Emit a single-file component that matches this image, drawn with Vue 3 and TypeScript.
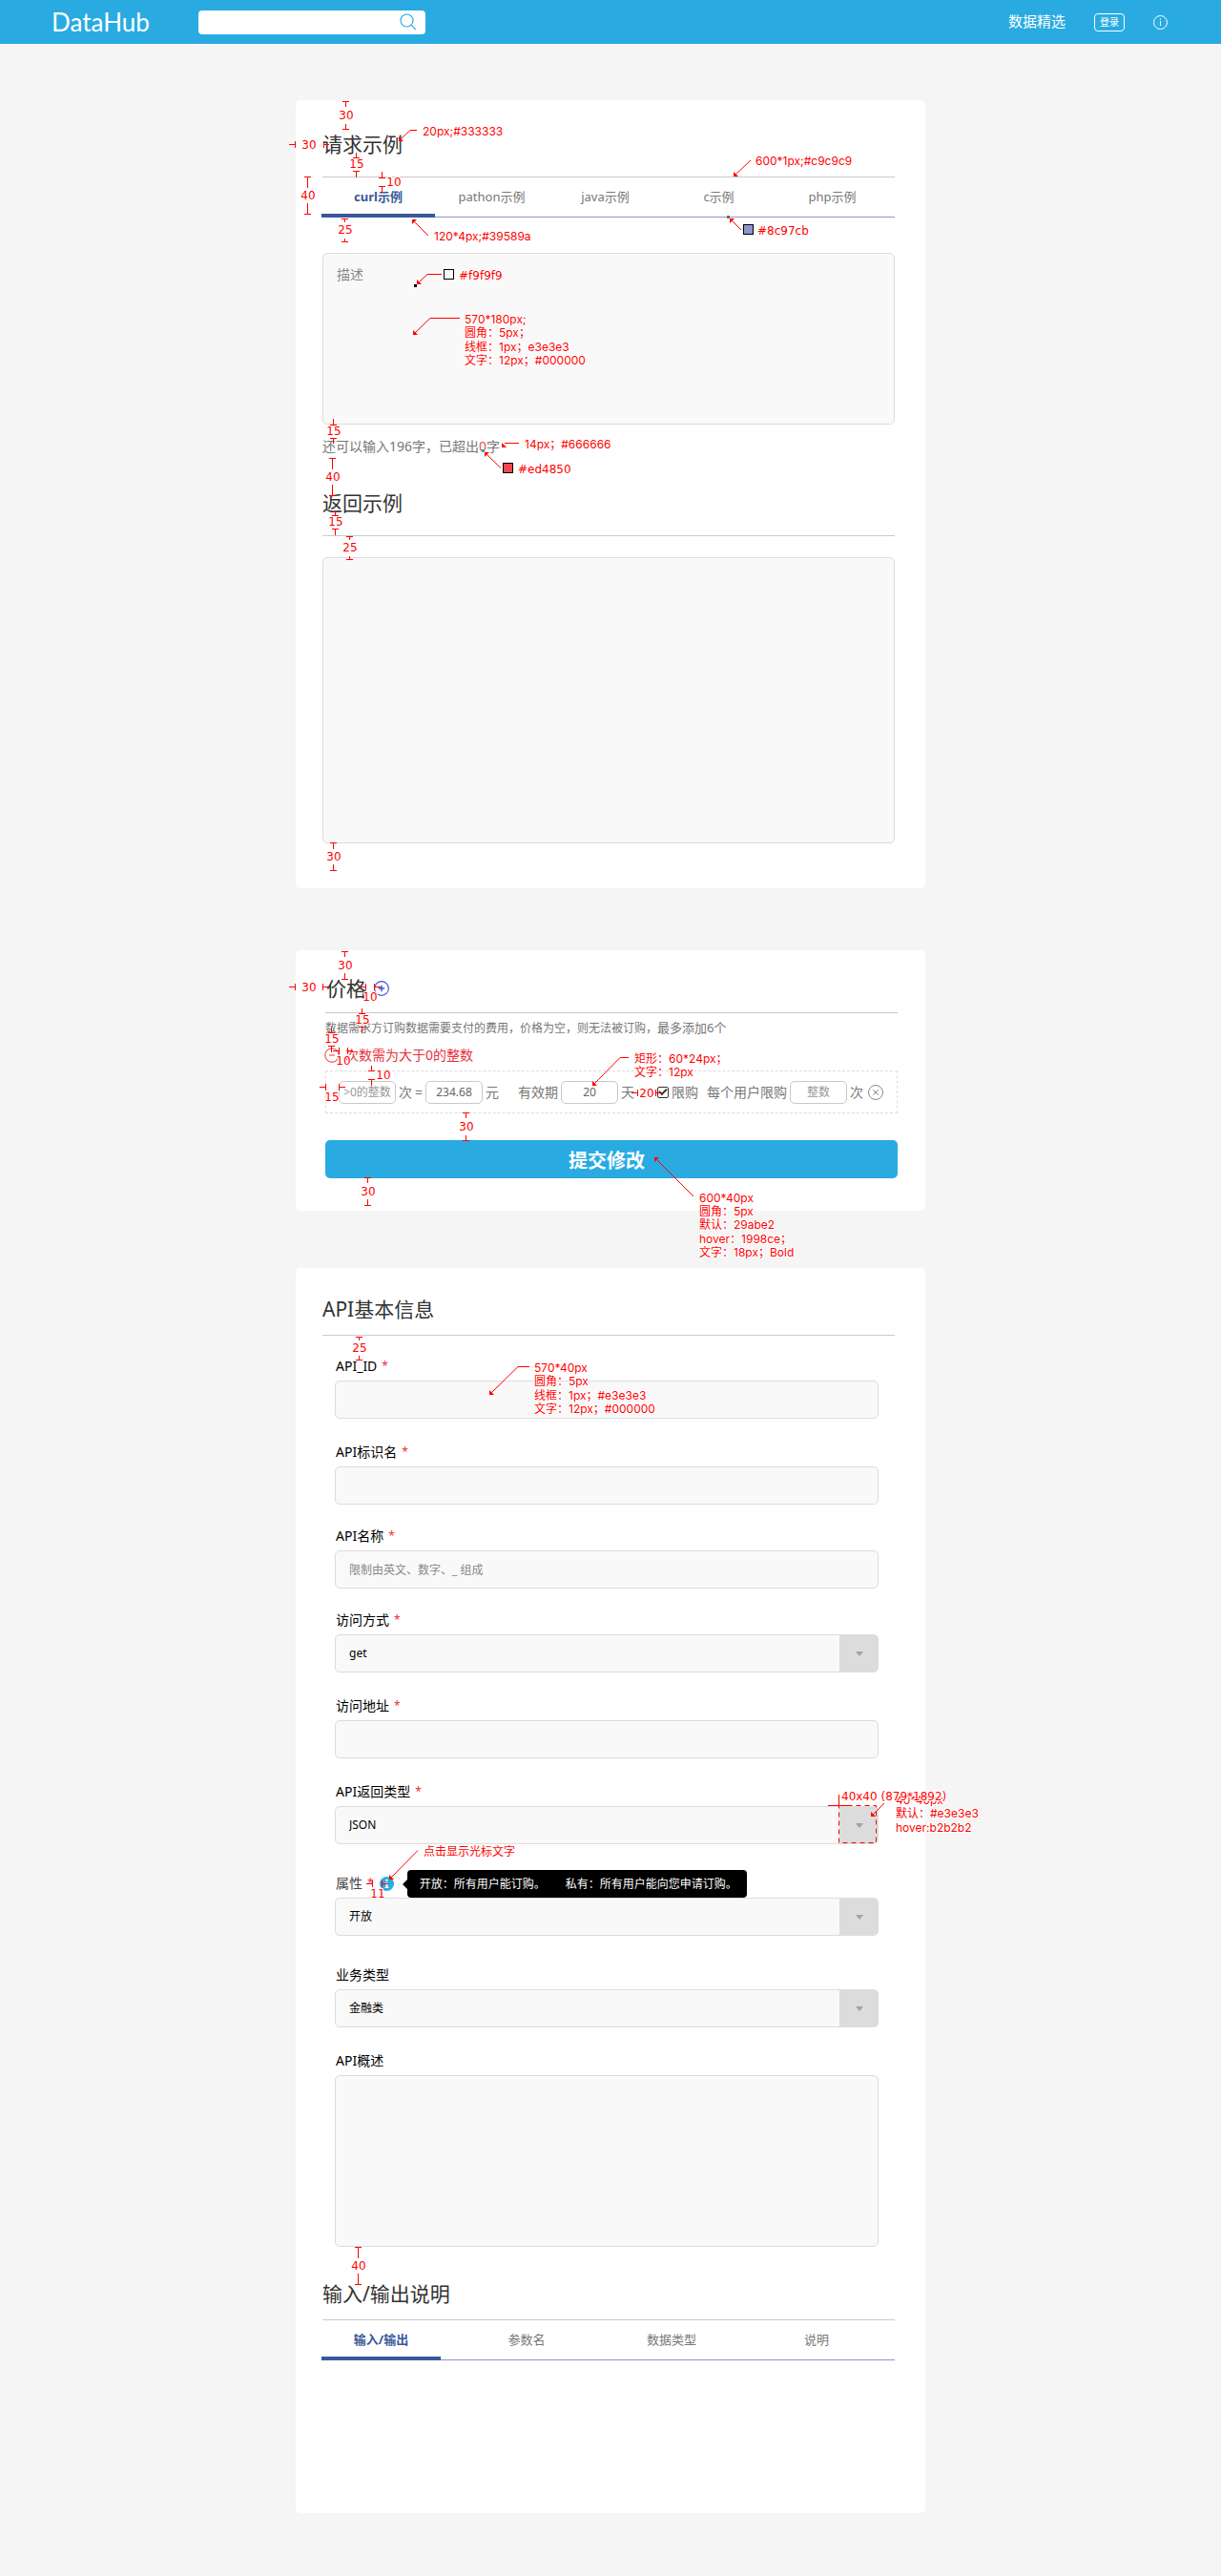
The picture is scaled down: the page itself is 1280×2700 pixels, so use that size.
<script setup lang="ts">
import { defineComponent, h, ref } from 'vue'
import type { PropType } from 'vue'

/** A spacing measurement: two end caps with stems, and the value between them. */
interface Mark {
  dir: 'v' | 'h'
  /** Fixed coordinate of the axis. */
  at: number
  /** Stem and cap of each end: the cap sits on the first value. */
  a: [number, number]
  b: [number, number]
  value: string
  tx: number
  ty: number
}

/** A remark with a leader line that ends in an arrow head. */
interface Note {
  lines: string[]
  x: number
  y: number[]
  leader: string
  tip: [number, number, 'dl' | 'ul']
  plain?: boolean
  swatch?: { x: number; y: number; fill: string }
  probe?: { x: number; y: number; fill: string }
}

interface Sheet {
  box: [number, number, number, number]
  marks: Mark[]
  notes: Note[]
}

const v = (at: number, a: [number, number], b: [number, number], value: string, tx: number, ty: number): Mark =>
  ({ dir: 'v', at, a, b, value, tx, ty })
const hz = (at: number, a: [number, number], b: [number, number], value: string, tx: number, ty: number): Mark =>
  ({ dir: 'h', at, a, b, value, tx, ty })

const exampleSheet: Sheet = {
  box: [310, 105, 660, 826],
  marks: [
    v(362.5, [106.5, 112], [135.5, 130], '30', 363, 121),
    hz(151.5, [309.5, 303], [339.5, 345], '30', 324, 152),
    v(373.5, [165.5, 160], [179.5, 186], '15', 374, 172),
    v(400.5, [186.5, 180], [195.5, 202], '10', 413, 191),
    v(322.5, [185.5, 197], [224.5, 213], '40', 323, 205),
    v(361.5, [229.5, 233], [253.5, 250], '25', 362, 241),
    v(349.5, [445.5, 439], [459.5, 465], '15', 350, 452),
    v(348.5, [480.5, 492], [519.5, 508], '40', 349, 500),
    v(351.5, [540.5, 535], [554.5, 561], '15', 352, 547),
    v(366.5, [562.5, 566], [586.5, 583], '25', 367, 574),
    v(349.5, [883.5, 890], [912.5, 906], '30', 350, 898)
  ],
  notes: [
    { lines: ['20px;#333333'], x: 443, y: [138], leader: '437,136.5 430,136.5 420,146', tip: [418, 148, 'dl'] },
    { lines: ['600*1px;#c9c9c9'], x: 792, y: [169], leader: '787,168 771,183', tip: [769, 185, 'dl'] },
    { lines: ['120*4px;#39589a'], x: 455, y: [248], leader: '449,247 434,232', tip: [432, 230, 'ul'] },
    {
      lines: ['#8c97cb'], x: 794, y: [242], leader: '777,241 767,231', tip: [765, 229, 'ul'], plain: true,
      swatch: { x: 779, y: 235, fill: '#8c97cb' }, probe: { x: 762, y: 226, fill: '#7a6a3c' }
    },
    {
      lines: ['#f9f9f9'], x: 481, y: [289], leader: '463,287.5 448,287.5 439,296', tip: [437, 298, 'dl'], plain: true,
      swatch: { x: 465, y: 282, fill: '#f9f9f9' }, probe: { x: 434, y: 298, fill: '#000' }
    },
    {
      lines: ['570*180px;', '圆角：5px；', '线框：1px；e3e3e3', '文字：12px；#000000'],
      x: 487, y: [335, 349, 364, 378], leader: '482,333.5 451,333.5 435,349', tip: [433, 351, 'dl']
    },
    { lines: ['14px；#666666'], x: 550, y: [466], leader: '544,464.5 529,464.5', tip: [526, 469, 'dl'] },
    {
      lines: ['#ed4850'], x: 543, y: [492], leader: '525,490.5 510,476', tip: [508, 474, 'ul'], plain: true,
      swatch: { x: 527, y: 485, fill: '#ed4850' }, probe: { x: 505, y: 471, fill: '#12b7af' }
    }
  ]
}

const priceSheet: Sheet = {
  box: [310, 996, 660, 273],
  marks: [
    v(361.5, [997.5, 1003], [1026.5, 1020], '30', 362, 1012),
    hz(1034.5, [309.5, 303], [338.5, 345], '30', 324, 1035),
    hz(1034.5, [383.5, 377], [392.5, 399], '10', 388, 1045),
    v(379.5, [1062.5, 1057], [1076.5, 1083], '15', 380, 1069),
    v(347.5, [1082.5, 1077], [1096.5, 1103], '15', 348, 1089),
    hz(1101.5, [355.5, 349], [364.5, 370], '10', 360, 1112),
    v(389.5, [1122.5, 1117], [1131.5, 1138], '10', 402, 1127),
    hz(1139.5, [341.5, 335], [355.5, 362], '15', 348, 1150),
    v(488.5, [1166.5, 1172], [1195.5, 1190], '30', 489, 1181),
    v(385.5, [1234.5, 1240], [1263.5, 1257], '30', 386, 1249),
    hz(1145.5, [668.5, 662], [687.5, 694], '20', 678, 1146)
  ],
  notes: [
    { lines: ['矩形：60*24px；', '文字：12px'], x: 665, y: [1110, 1124], leader: '659,1108.5 650,1108.5 623,1136', tip: [621, 1138, 'dl'] },
    {
      lines: ['600*40px', '圆角：5px', '默认：29abe2', 'hover：1998ce；', '文字：18px；Bold'],
      x: 733, y: [1256, 1270, 1284, 1299, 1313], leader: '727,1254 688,1215', tip: [686, 1213, 'ul']
    }
  ]
}

const apiSheet: Sheet = {
  box: [310, 1329, 660, 1305],
  marks: [
    v(376.5, [1401.5, 1405], [1425.5, 1421], '25', 377, 1413),
    hz(1974.5, [390.5, 384], [400.5, 407], '11', 396, 1985),
    v(375.5, [2355.5, 2367], [2394.5, 2383], '40', 376, 2375)
  ],
  notes: [
    {
      lines: ['570*40px', '圆角：5px', '线框：1px；#e3e3e3', '文字：12px；#000000'],
      x: 560, y: [1434, 1448, 1463, 1477], leader: '555,1432.5 543,1432.5 515,1460', tip: [513, 1462, 'dl']
    },
    {
      lines: ['40*40px', '默认：#e3e3e3', 'hover:b2b2b2'],
      x: 939, y: [1887, 1901, 1916], leader: '927,1890 915,1902', tip: [913, 1904, 'dl']
    },
    { lines: ['点击显示光标文字'], x: 444, y: [1941], leader: '438,1939.5 410,1968', tip: [408, 1970, 'dl'] }
  ]
}

function markPath(m: Mark): string {
  return [m.a, m.b]
    .map(([cap, end]) =>
      m.dir === 'v'
        ? `M${m.at} ${cap}V${end}M${m.at - 3.5} ${cap}h7`
        : `M${cap} ${m.at}H${end}M${cap} ${m.at - 3.5}v7`
    )
    .join('')
}

function headPoints([x, y, d]: Note['tip']): string {
  return d === 'dl' ? `${x},${y} ${x},${y - 5} ${x + 5},${y}` : `${x},${y} ${x + 5},${y} ${x},${y + 5}`
}

const Redlines = defineComponent({
  props: { sheet: { type: Object as PropType<Sheet>, required: true } },
  setup(props, { slots }) {
    return () => {
      const s = props.sheet
      return h(
        'svg',
        { class: 'redlines', width: s.box[2], height: s.box[3], viewBox: s.box.join(' ') },
        [
          ...s.marks.map(m =>
            h('g', [
              h('path', { class: 'rl-line', d: markPath(m) }),
              h('text', { class: 'rl-value', x: m.tx, y: m.ty + 4 }, m.value)
            ])
          ),
          ...s.notes.map(n =>
            h('g', [
              h('polyline', { class: 'rl-line', points: n.leader }),
              h('polygon', { class: 'rl-head', points: headPoints(n.tip) }),
              n.swatch
                ? h('rect', { x: n.swatch.x + 0.5, y: n.swatch.y + 0.5, width: 10, height: 10, fill: n.swatch.fill, stroke: '#000' })
                : null,
              n.probe ? h('rect', { x: n.probe.x, y: n.probe.y, width: 3, height: 3, fill: n.probe.fill }) : null,
              ...n.lines.map((line, i) =>
                h('text', { class: n.plain ? 'rl-text rl-plain' : 'rl-text', x: n.x, y: n.y[i] + 4 }, line)
              )
            ])
          ),
          slots.default?.()
        ]
      )
    }
  }
})

const exampleTabs = ['curl示例', 'pathon示例', 'java示例', 'c示例', 'php示例']
const ioTabs = ['输入/输出', '参数名', '数据类型', '说明']
const exampleTab = ref(0)
const ioTab = ref(0)

interface Field {
  id: string
  label: string
  kind: 'text' | 'select' | 'area'
  required?: boolean
  placeholder?: string
  options?: string[]
  space?: 'tight' | 'loose'
  tip?: string[]
}

const fields: Field[] = [
  { id: 'api-id', label: 'API_ID', kind: 'text', required: true },
  { id: 'api-key', label: 'API标识名', kind: 'text', required: true },
  { id: 'api-name', label: 'API名称', kind: 'text', required: true, placeholder: '限制由英文、数字、_ 组成', space: 'tight' },
  { id: 'api-method', label: '访问方式', kind: 'select', required: true, options: ['get'], space: 'tight' },
  { id: 'api-url', label: '访问地址', kind: 'text', required: true },
  { id: 'api-return', label: 'API返回类型', kind: 'select', required: true, options: ['JSON'] },
  {
    id: 'api-access', label: '属性', kind: 'select', required: true, options: ['开放'], space: 'loose',
    tip: ['开放：所有用户能订购。', '私有：所有用户能向您申请订购。']
  },
  { id: 'api-biz', label: '业务类型', kind: 'select', options: ['金融类'], space: 'loose' },
  { id: 'api-desc', label: 'API概述', kind: 'area' }
]

const limited = ref(true)
const amount = ref('234.68')
const days = ref('20')
</script>

<template>
  <div class="page">
    <header class="topbar">
      <a class="logo" href="#">DataHub</a>
      <form class="search" role="search" @submit.prevent>
        <input type="search" aria-label="搜索" />
        <button type="submit" aria-label="搜索">
          <svg width="18" height="18" viewBox="0 0 18 18" fill="none" stroke="#29abe2" stroke-width="1.2">
            <circle cx="7.5" cy="7.5" r="6.5" />
            <path d="M12 12.2l5 5" />
          </svg>
        </button>
      </form>
      <nav class="topnav">
        <a class="picks" href="#">数据精选</a>
        <button class="login" type="button">登录</button>
        <a class="about" href="#" aria-label="关于">
          <svg width="15" height="15" viewBox="0 0 15 15" fill="none" stroke="#fff">
            <circle cx="7.5" cy="7.5" r="7" />
            <path d="M7.5 6v5M7.5 3.5v1.3" />
          </svg>
        </a>
      </nav>
    </header>

    <main class="board">
      <section class="card examples">
        <h2>请求示例</h2>
        <div class="tabs" role="tablist">
          <button
            v-for="(t, i) in exampleTabs"
            :key="t"
            type="button"
            role="tab"
            class="tab"
            :class="{ active: i === exampleTab }"
            :aria-selected="i === exampleTab"
            @click="exampleTab = i"
          >{{ t }}</button>
        </div>
        <textarea class="box request" placeholder="描述" aria-label="描述"></textarea>
        <p class="counter">还可以输入196字，已超出<em>0</em>字</p>
        <h2>返回示例</h2>
        <textarea class="box response" aria-label="返回示例"></textarea>
        <Redlines :sheet="exampleSheet" />
      </section>

      <section class="card price">
        <h2>
          价格
          <button class="icon-btn" type="button" aria-label="添加">
            <svg width="16" height="16" viewBox="0 0 16 16" fill="none" stroke="#3452d8">
              <circle cx="8" cy="8" r="7.4" stroke-width="1.1" />
              <path d="M8 4.8v6.4M4.8 8h6.4" stroke-width="1.4" />
            </svg>
          </button>
        </h2>
        <p class="hint">数据需求方订购数据需要支付的费用，价格为空，则无法被订购，<span class="cap">最多添加6个</span></p>
        <p class="error">
          <svg width="16" height="16" viewBox="0 0 16 16" fill="none" stroke="#e8303c">
            <circle cx="8" cy="8" r="7.2" />
            <path d="M5 8h6" />
          </svg>
          次数需为大于0的整数
        </p>
        <div class="plan">
          <div class="group">
            <input id="times" class="small" type="text" placeholder="&gt;0的整数" />
            <label for="times">次</label>
            <span>=</span>
            <input id="amount" v-model="amount" class="small" type="text" />
            <label for="amount">元</label>
          </div>
          <div class="group valid">
            <label for="days">有效期</label>
            <input id="days" v-model="days" class="small" type="text" />
            <span>天</span>
          </div>
          <div class="group limit">
            <input id="limit" v-model="limited" type="checkbox" />
            <label for="limit">限购</label>
          </div>
          <div class="group each">
            <label for="each">每个用户限购</label>
            <input id="each" class="small" type="text" placeholder="整数" />
            <span>次</span>
          </div>
          <button class="icon-btn" type="button" aria-label="删除">
            <svg width="16" height="16" viewBox="0 0 16 16" fill="none" stroke="#888">
              <circle cx="8" cy="8" r="7.5" />
              <path d="M5.3 5.3l5.4 5.4M10.7 5.3l-5.4 5.4" />
            </svg>
          </button>
        </div>
        <button class="submit" type="button">提交修改</button>
        <Redlines :sheet="priceSheet" />
      </section>

      <section class="card api">
        <h2>API基本信息</h2>
        <div class="fields">
          <div v-for="f in fields" :key="f.id" class="field" :class="f.space">
            <div class="caption">
              <label :for="f.id" :class="{ soft: f.tip }">{{ f.label }}</label>
              <span v-if="f.required" class="star">*</span>
              <span v-if="f.tip" class="help">
                <button class="icon-btn" type="button" aria-label="说明">
                  <svg width="15" height="15" viewBox="0 0 15 15">
                    <circle cx="7.5" cy="7.5" r="7.5" fill="#29abe2" />
                    <path d="M6.5 2.8h2v2h-2zM5.7 6.2h2.8v4.6h1v1.2H5.6v-1.2h.9V7.4h-.8z" fill="#fff" />
                  </svg>
                </button>
                <span class="tooltip" role="tooltip">
                  <span v-for="t in f.tip" :key="t">{{ t }}</span>
                </span>
              </span>
            </div>
            <input v-if="f.kind === 'text'" :id="f.id" class="box line" type="text" :placeholder="f.placeholder" />
            <div v-else-if="f.kind === 'select'" class="picker">
              <select :id="f.id" class="box line">
                <option v-for="o in f.options" :key="o">{{ o }}</option>
              </select>
            </div>
            <textarea v-else :id="f.id" class="box overview"></textarea>
          </div>
        </div>
        <h2>输入/输出说明</h2>
        <div class="tabs io" role="tablist">
          <button
            v-for="(t, i) in ioTabs"
            :key="t"
            type="button"
            role="tab"
            class="tab"
            :class="{ active: i === ioTab }"
            :aria-selected="i === ioTab"
            @click="ioTab = i"
          >{{ t }}</button>
        </div>
        <Redlines :sheet="apiSheet">
          <path class="rl-line" d="M879.5 1881v12M868 1892.5h25" />
          <rect class="rl-line" x="879.5" y="1892.5" width="39" height="39" stroke-dasharray="5 4" />
          <text class="rl-text rl-plain" x="882" y="1887">40x40 (879*1892)</text>
        </Redlines>
      </section>
    </main>
  </div>
</template>

<style>
body {
  margin: 0;
  background: #f5f5f5;
}
.redlines {
  position: absolute;
  top: 0;
  left: 0;
  overflow: visible;
  pointer-events: none;
}
.rl-line {
  fill: none;
  stroke: #f00;
}
.rl-head {
  fill: #f00;
}
.rl-value,
.rl-text {
  fill: #f00;
  stroke: #fff;
  stroke-width: 2px;
  stroke-linejoin: round;
  paint-order: stroke;
  font-size: 12px;
}
.rl-value,
.rl-plain {
  font-family: "DejaVu Sans", sans-serif;
}
.rl-value {
  text-anchor: middle;
}
.rl-text:not(.rl-plain) {
  font-family: Inter, "Noto Sans CJK SC", sans-serif;
  font-feature-settings: "calt" 0;
}
</style>

<style scoped>
.page,
.page button,
.page input,
.page select,
.page textarea {
  box-sizing: border-box;
  font-family: "Noto Sans", "Noto Sans CJK SC", sans-serif;
}
.page {
  padding-bottom: 66px;
  background: #f5f5f5;
  color: #333;
}
h2,
p {
  margin: 0;
}
button {
  padding: 0;
  border: 0;
  background: none;
  cursor: pointer;
}
a {
  color: inherit;
  text-decoration: none;
}

/* top bar */
.topbar {
  display: flex;
  align-items: center;
  height: 46px;
  padding: 0 56px 0 54px;
  background: #29abe2;
  color: #fff;
}
.logo {
  width: 154px;
  font-family: Lato, sans-serif;
  font-size: 26px;
  line-height: 44px;
}
.search {
  display: flex;
  align-items: center;
  width: 238px;
  height: 25px;
  padding-right: 9px;
  box-sizing: border-box;
  border-radius: 4px;
  background: #fff;
}
.search input {
  flex: 1;
  min-width: 0;
  border: 0;
  outline: 0;
  background: none;
  padding: 0 8px;
  font-size: 12px;
}
.search button {
  display: flex;
}
.topnav {
  display: flex;
  align-items: center;
  gap: 30px;
  margin-left: auto;
}
.picks {
  font-size: 15px;
  line-height: 22px;
  padding-bottom: 2px;
}
.login {
  width: 32px;
  height: 19px;
  border: 1px solid #fff;
  border-radius: 4px;
  color: #fff;
  font-size: 10px;
  line-height: 16px;
}
.about {
  display: flex;
}

/* cards */
.board {
  display: flex;
  flex-direction: column;
  align-items: center;
  padding-top: 59px;
}
.card {
  position: relative;
  box-sizing: border-box;
  width: 100%;
  max-width: 660px;
  border-radius: 5px;
  background: #fff;
}
.examples {
  padding: 30px 32px 47px 28px;
}
.price {
  margin-top: 65px;
  padding: 24px 29px 34px 31px;
}
.api {
  margin-top: 60px;
  padding: 27px 32px 160px 28px;
}
h2 {
  border-bottom: 1px solid #c9c9c9;
  font-size: 21px;
  font-weight: 400;
  line-height: 32px;
}
.examples h2 {
  padding-bottom: 18px;
}
.api h2 {
  padding-bottom: 11px;
}
.price h2 {
  display: flex;
  align-items: center;
  gap: 8px;
  padding: 0 0 9px 1px;
}
.icon-btn {
  display: flex;
}

/* tabs */
.tabs {
  display: flex;
  height: 42px;
  margin-left: -1px;
  padding-right: 6px;
  box-shadow: inset 0 -1px #8c97cb;
}
.tab {
  flex: 1;
  border-bottom: 4px solid transparent;
  color: #777;
  font-size: 13px;
}
.tab.active {
  border-color: #39589a;
  color: #39589a;
  font-weight: 700;
}
.io .tab:first-child {
  flex: 0 0 125px;
  margin-right: 14px;
}

/* form boxes */
.box {
  display: block;
  width: 100%;
  border: 1px solid #dcdcdc;
  border-radius: 5px;
  background: #f9f9f9;
  color: #000;
  font-size: 12px;
  resize: none;
  outline: 0;
}
.box::placeholder {
  color: #888;
  opacity: 1;
}
.request {
  height: 180px;
  margin-top: 37px;
  padding: 12px 14px;
  font-size: 14px;
  line-height: 20px;
}
.counter {
  margin: 13px 0 33px;
  color: #777;
  font-size: 14px;
  line-height: 20px;
}
.counter em {
  color: #ed4850;
  font-style: normal;
}
.response {
  height: 300px;
  margin-top: 22px;
}

/* price */
.hint {
  margin-top: 6px;
  color: #777;
  font-size: 12px;
  line-height: 20px;
}
.cap {
  font-size: 13px;
  line-height: 16px;
}
.error {
  display: flex;
  align-items: center;
  gap: 6px;
  margin: 8px 0 6px -1px;
  color: #e8303c;
  font-size: 14px;
  line-height: 20px;
}
.plan {
  display: flex;
  align-items: center;
  box-sizing: border-box;
  height: 45px;
  padding-left: 13px;
  border: 1px dashed #dcdcdc;
  color: #777;
  font-size: 14px;
  line-height: 20px;
  white-space: nowrap;
}
.group {
  display: flex;
  align-items: center;
  gap: 3px;
}
.valid {
  margin-left: 20px;
}
.limit {
  margin-left: 24px;
}
.each {
  margin: 0 5px 0 9px;
}
.small {
  width: 60px;
  height: 24px;
  padding: 0;
  border: 1px solid #c9c9c9;
  border-radius: 5px;
  background: #fff;
  color: #666;
  font-size: 12px;
  text-align: center;
  outline: 0;
}
.small::placeholder {
  color: #999;
  opacity: 1;
}
.limit input {
  display: grid;
  place-items: center;
  width: 12px;
  height: 12px;
  margin: 0;
  border: 1px solid #333;
  border-radius: 2px;
  appearance: none;
}
.limit input:checked::after {
  content: "";
  width: 6px;
  height: 3px;
  margin-bottom: 2px;
  border: solid #333;
  border-width: 0 0 2px 2px;
  transform: rotate(-45deg);
}
.submit {
  width: 100%;
  height: 40px;
  margin-top: 28px;
  padding-right: 10px;
  border-radius: 5px;
  background: #29abe2;
  color: #fff;
  font-size: 20px;
  font-weight: 700;
}
.submit:hover {
  background: #1998ce;
}

/* api form */
.fields {
  margin: 22px 17px 33px 13px;
}
.field + .field {
  margin-top: 25px;
}
.field + .tight {
  margin-top: 23px;
}
.field + .loose {
  margin-top: 31px;
}
.caption {
  display: flex;
  align-items: center;
  height: 20px;
  margin-bottom: 5px;
  padding-left: 1px;
  color: #000;
  font-size: 14px;
  line-height: 20px;
}
.caption .soft {
  color: #444;
}
.star {
  margin-left: 5px;
  color: #ed2f3a;
  font-size: 12px;
}
.line {
  height: 40px;
  padding: 0 14px;
}
.picker {
  position: relative;
}
.picker select {
  padding-bottom: 2px;
  appearance: none;
  background: linear-gradient(#dcdcdc, #dcdcdc) right / 40px 100% no-repeat #f9f9f9;
}
.picker::after {
  content: "";
  position: absolute;
  top: 18px;
  right: 16px;
  border: solid transparent;
  border-width: 5px 4px 0;
  border-top-color: #a3a3a3;
  pointer-events: none;
}
.overview {
  height: 180px;
  padding: 12px 14px;
}
.help {
  position: relative;
  margin-left: 6px;
}
.tooltip {
  position: absolute;
  top: -7px;
  left: 29px;
  display: flex;
  gap: 21px;
  padding: 0 10px 0 13px;
  border-radius: 4px;
  background: #000;
  color: #fff;
  font-size: 12px;
  line-height: 29px;
  white-space: nowrap;
}
.tooltip::before {
  content: "";
  position: absolute;
  top: 10px;
  left: -5px;
  border: solid transparent;
  border-width: 5px 5px 5px 0;
  border-right-color: #000;
}
</style>
